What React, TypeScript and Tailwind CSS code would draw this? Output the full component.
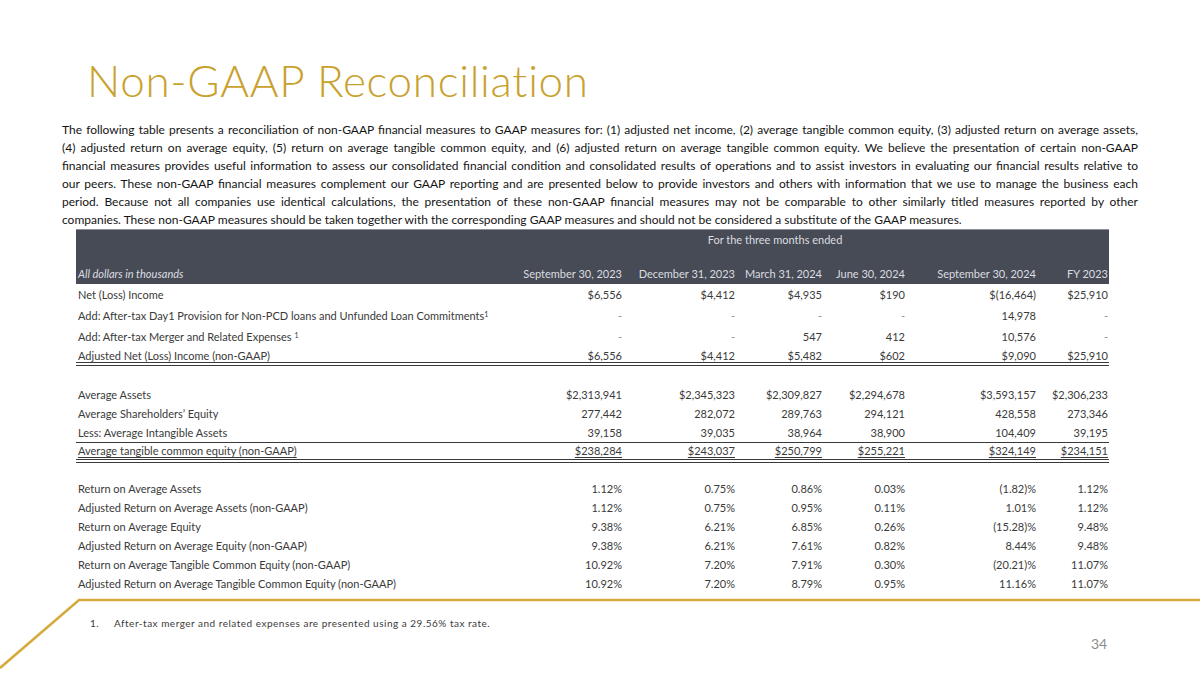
import React from 'react';

const cols = ['September 30, 2023', 'December 31, 2023', 'March 31, 2024', 'June 30, 2024', 'September 30, 2024', 'FY 2023'];

const paragraph = [
  'The following table presents a reconciliation of non-GAAP financial measures to GAAP measures for: (1) adjusted net income, (2) average tangible common equity, (3) adjusted return on average assets,',
  '(4) adjusted return on average equity, (5) return on average tangible common equity, and (6) adjusted return on average tangible common equity. We believe the presentation of certain non-GAAP',
  'financial measures provides useful information to assess our consolidated financial condition and consolidated results of operations and to assist investors in evaluating our financial results relative to',
  'our peers. These non-GAAP financial measures complement our GAAP reporting and are presented below to provide investors and others with information that we use to manage the business each',
  'period. Because not all companies use identical calculations, the presentation of these non-GAAP financial measures may not be comparable to other similarly titled measures reported by other',
  'companies. These non-GAAP measures should be taken together with the corresponding GAAP measures and should not be considered a substitute of the GAAP measures.',
];

const grid = 'grid grid-cols-[437px_110px_113px_87px_83px_131px_72px] items-center';

interface RowProps {
  label: React.ReactNode;
  values: string[];
  underline?: boolean;
  className?: string;
}

function Row({ label, values, underline, className = '' }: RowProps) {
  const u = underline ? 'underline underline-offset-[2px] decoration-1' : '';
  return (
    <div className={`${grid} ${className}`}>
      <div className="pl-[2px] whitespace-nowrap">
        <span className={u}>{label}</span>
      </div>
      {values.map((v, i) => (
        <div key={i} className="text-right pr-[1px] whitespace-nowrap">
          <span className={v === '-' ? 'text-[#8a8a8a]' : u}>{v}</span>
        </div>
      ))}
    </div>
  );
}

export default function App() {
  return (
    <div className="relative w-[1200px] h-[675px] bg-white overflow-hidden font-['Lato',sans-serif]">
      {/* Title */}
      <h1 className="pl-[87px] pt-[58px] text-[44px] leading-none font-light text-[#c9a12e] tracking-[0.7px]">
        Non-GAAP Reconciliation
      </h1>

      {/* Intro text */}
      <div className="ml-[62px] w-[1076px] mt-[19px] text-[12px] leading-[18px] text-[#141414]">
        {paragraph.map((line, i) => (
          <div
            key={i}
            className={i < paragraph.length - 1 ? 'text-justify [text-align-last:justify]' : 'text-left'}
          >
            {line}
          </div>
        ))}
      </div>

      {/* Table */}
      <div className="ml-[76px] w-[1033px] text-[11px] text-[#3a3a3a]">
        <div className="h-[55px] bg-[#474b55] border-t border-[#8d9099] text-[#dcdde0] flex flex-col">
          <div className={`${grid} h-[20px]`}>
            <div />
            <div className="col-span-5 text-center">For the three months ended</div>
            <div />
          </div>
          <div className={`${grid} mt-auto h-[20px]`}>
            <div className="pl-[2px] italic">All dollars in thousands</div>
            {cols.map((c) => (
              <div key={c} className="text-right pr-[1px] whitespace-nowrap">{c}</div>
            ))}
          </div>
        </div>

        <Row className="h-[21px] mt-[1px]" label="Net (Loss) Income" values={['$6,556', '$4,412', '$4,935', '$190', '$(16,464)', '$25,910']} />
        <Row
          className="h-[21px]"
          label={<>Add: After-tax Day1 Provision for Non-PCD loans and Unfunded Loan Commitments<sup className="text-[7px]">1</sup></>}
          values={['-', '-', '-', '-', '14,978', '-']}
        />
        <Row
          className="h-[21px]"
          label={<>Add: After-tax Merger and Related Expenses <sup className="text-[7px]">1</sup></>}
          values={['-', '-', '547', '412', '10,576', '-']}
        />
        <Row
          className="h-[18px] border-b-4 border-double border-[#3a3a3a]"
          underline
          label="Adjusted Net (Loss) Income (non-GAAP)"
          values={['$6,556', '$4,412', '$5,482', '$602', '$9,090', '$25,910']}
        />

        <Row className="h-[19px] mt-[20px]" label="Average Assets" values={['$2,313,941', '$2,345,323', '$2,309,827', '$2,294,678', '$3,593,157', '$2,306,233']} />
        <Row className="h-[19px]" label="Average Shareholders’ Equity" values={['277,442', '282,072', '289,763', '294,121', '428,558', '273,346']} />
        <Row className="h-[19px] border-b border-[#3a3a3a]" label="Less: Average Intangible Assets" values={['39,158', '39,035', '38,964', '38,900', '104,409', '39,195']} />
        <Row
          className="h-[20px] border-b-4 border-double border-[#3a3a3a]"
          underline
          label="Average tangible common equity (non-GAAP)"
          values={['$238,284', '$243,037', '$250,799', '$255,221', '$324,149', '$234,151']}
        />

        <Row className="h-[19px] mt-[17px]" label="Return on Average Assets" values={['1.12%', '0.75%', '0.86%', '0.03%', '(1.82)%', '1.12%']} />
        <Row className="h-[19px]" label="Adjusted Return on Average Assets (non-GAAP)" values={['1.12%', '0.75%', '0.95%', '0.11%', '1.01%', '1.12%']} />
        <Row className="h-[19px]" label="Return on Average Equity" values={['9.38%', '6.21%', '6.85%', '0.26%', '(15.28)%', '9.48%']} />
        <Row className="h-[19px]" label="Adjusted Return on Average Equity (non-GAAP)" values={['9.38%', '6.21%', '7.61%', '0.82%', '8.44%', '9.48%']} />
        <Row className="h-[19px]" label="Return on Average Tangible Common Equity (non-GAAP)" values={['10.92%', '7.20%', '7.91%', '0.30%', '(20.21)%', '11.07%']} />
        <Row className="h-[19px]" label="Adjusted Return on Average Tangible Common Equity (non-GAAP)" values={['10.92%', '7.20%', '8.79%', '0.95%', '11.16%', '11.07%']} />
      </div>

      {/* Footnote */}
      <div className="mt-[22px] ml-[90px] flex text-[10px] tracking-[0.5px] text-[#3a3a3a]">
        <span className="w-[24px]">1.</span>
        <span>After-tax merger and related expenses are presented using a 29.56% tax rate.</span>
      </div>

      {/* Page number */}
      <div className="absolute left-[1091px] top-[637px] text-[14px] leading-none text-[#8c8c8c]">34</div>

      {/* Decorative gold rule */}
      <svg className="absolute left-0 top-0 pointer-events-none" width="1200" height="675">
        <polyline points="0,668 79,600 1200,600" fill="none" stroke="#d4aa3c" strokeWidth="2.5" />
      </svg>
    </div>
  );
}
